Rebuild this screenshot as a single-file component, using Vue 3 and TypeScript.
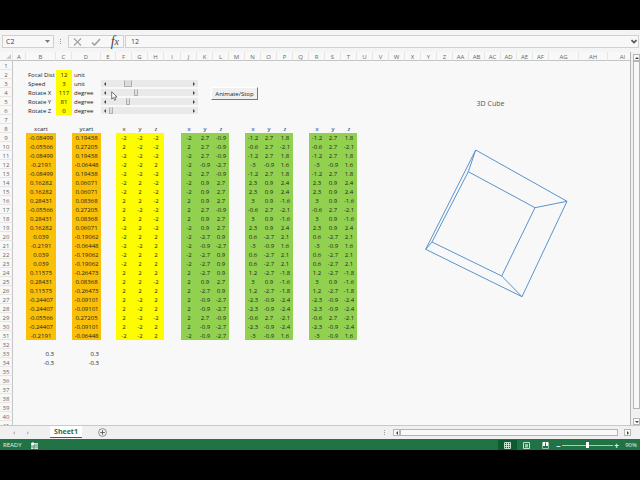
<script setup lang="ts">
import { computed, reactive, ref } from 'vue'

type Triple = [number, number, number]

interface Vertex {
  cart: [number, number]
  base: Triple
  rotX: Triple
  rotY: Triple
}

interface Cell {
  text: string | number
  kind: string
}

interface Setting {
  label: string
  unit: string
  value: number
  max: number
  wide: boolean
}

const vertices: Record<string, Vertex> = {
  A: { cart: [-0.08499, 0.19438], base: [-2, -2, -2], rotX: [-2, 2.7, -0.9], rotY: [-1.2, 2.7, 1.8] },
  B: { cart: [-0.05566, 0.27205], base: [2, -2, -2], rotX: [2, 2.7, -0.9], rotY: [-0.6, 2.7, -2.1] },
  C: { cart: [-0.2191, -0.06448], base: [-2, -2, 2], rotX: [-2, -0.9, -2.7], rotY: [-3, -0.9, 1.6] },
  D: { cart: [0.16282, 0.06071], base: [-2, 2, -2], rotX: [-2, 0.9, 2.7], rotY: [2.3, 0.9, 2.4] },
  E: { cart: [0.28431, 0.08368], base: [2, 2, -2], rotX: [2, 0.9, 2.7], rotY: [3, 0.9, -1.6] },
  F: { cart: [0.039, -0.19062], base: [-2, 2, 2], rotX: [-2, -2.7, 0.9], rotY: [0.6, -2.7, 2.1] },
  G: { cart: [0.11575, -0.26473], base: [2, 2, 2], rotX: [2, -2.7, 0.9], rotY: [1.2, -2.7, -1.8] },
  H: { cart: [-0.24407, -0.09101], base: [2, -2, 2], rotX: [2, -0.9, -2.7], rotY: [-2.3, -0.9, -2.4] },
}
const path = 'ABACADDEBEDFCFFGEGHHBHC'

const columns: string[] = [
  ...'ABCDEFGHIJKLMNOPQRSTUVWXYZ'.split(''),
  'AA', 'AB', 'AC', 'AD', 'AE', 'AF', 'AG', 'AH', 'AI',
]
const sizes: Record<string, string> = {
  A: 'c-a', B: 'c-b', C: 'c-c', D: 'c-d', E: 'c-e', I: 'c-i', AG: 'c-ag', AH: 'c-ah', AI: 'c-ai',
}

const settings = reactive<Setting[]>([
  { label: 'Focal Dist', unit: 'unit', value: 12, max: 100, wide: false },
  { label: 'Speed', unit: 'unit', value: 3, max: 14, wide: true },
  { label: 'Rotate X', unit: 'degree', value: 117, max: 360, wide: false },
  { label: 'Rotate Y', unit: 'degree', value: 81, max: 360, wide: false },
  { label: 'Rotate Z', unit: 'degree', value: 0, max: 360, wide: false },
])
const sliders = computed(() => settings.slice(1))
const zoomLevel = ref(90)

const blocks = [
  { start: 5, kind: 'yellow', key: 'base' as const },
  { start: 9, kind: 'green', key: 'rotX' as const },
  { start: 13, kind: 'green', key: 'rotY' as const },
  { start: 17, kind: 'green', key: 'rotY' as const },
]

const rows = computed<Cell[][]>(() =>
  Array.from({ length: 41 }, (_, i) => {
    const n = i + 1
    const cells: Cell[] = columns.map(() => ({ text: '', kind: '' }))
    if (n >= 2 && n <= 6) {
      const s = settings[n - 2]
      cells[1] = { text: s.label, kind: 'left' }
      cells[2] = { text: s.value, kind: 'yellow' }
      cells[3] = { text: s.unit, kind: 'left' }
    }
    if (n === 8) {
      cells[1].text = 'xcart'
      cells[3].text = 'ycart'
      blocks.forEach((b) => 'xyz'.split('').forEach((t, k) => { cells[b.start + k].text = t }))
    }
    if (n >= 9 && n <= 31) {
      const v = vertices[path[n - 9]]
      cells[1] = { text: v.cart[0], kind: 'orange' }
      cells[3] = { text: v.cart[1], kind: 'orange' }
      blocks.forEach((b) => v[b.key].forEach((t, k) => { cells[b.start + k] = { text: t, kind: b.kind } }))
    }
    if (n === 33 || n === 34) {
      const t = n === 33 ? 0.3 : -0.3
      cells[1] = { text: t, kind: 'right' }
      cells[3] = { text: t, kind: 'right' }
    }
    return cells
  }),
)
</script>

<template>
  <div class="screen">
    <header class="formula-bar">
      <div class="name-box">
        <input class="name" aria-label="Name box" value="C2" />
        <button class="plain" aria-label="Cell list">
          <svg width="5" height="3" viewBox="0 0 5 3"><path d="M0 0h5L2.500 3z" fill="#777" /></svg>
        </button>
      </div>
      <span class="dots"></span>
      <div class="tools">
        <button class="plain" aria-label="Cancel">
          <svg width="9" height="8" viewBox="0 0 9 8"><path d="M1 .5 8 7.500M8 .5 1 7.500" stroke="#a3a3a3" stroke-width="1.200" /></svg>
        </button>
        <button class="plain" aria-label="Enter">
          <svg width="10" height="8" viewBox="0 0 10 8"><path d="M1 4.500 3.500 7 9 1" fill="none" stroke="#a3a3a3" stroke-width="1.700" /></svg>
        </button>
        <button class="plain fx" aria-label="Insert function">f<span class="fx-x">x</span></button>
      </div>
      <div class="formula">
        <input aria-label="Formula" value="12" />
        <button class="plain" aria-label="Expand formula bar">
          <svg width="6" height="5" viewBox="0 0 6 5"><path d="M.5 1 3 3.500 5.500 1" fill="none" stroke="#555" stroke-width="1.600" /></svg>
        </button>
      </div>
    </header>

    <main class="workspace">
      <div class="sheet">
        <table>
          <colgroup>
            <col class="c-head" />
            <col v-for="c in columns" :key="c" :class="sizes[c] || 'c-std'" />
          </colgroup>
          <thead>
            <tr>
              <th class="corner"><svg width="5" height="5" viewBox="0 0 5 5"><path d="M5 0v5H0z" fill="#ccc" /></svg></th>
              <th v-for="c in columns" :key="c" scope="col">{{ c }}</th>
            </tr>
          </thead>
          <tbody>
            <tr v-for="(row, i) in rows" :key="i">
              <th scope="row">{{ i + 1 }}</th>
              <td v-for="(cell, k) in row" :key="k" :class="cell.kind">{{ cell.text }}</td>
            </tr>
          </tbody>
        </table>

        <div class="sliders">
          <div v-for="s in sliders" :key="s.label" class="slider">
            <span class="tri prev"></span>
            <input v-model.number="s.value" type="range" min="0" :max="s.max" :class="{ wide: s.wide }" :aria-label="s.label" />
            <span class="tri next"></span>
          </div>
        </div>
        <button class="animate">Animate/Stop</button>

        <figure class="chart">
          <figcaption>3D Cube</figcaption>
          <svg viewBox="0 0 150 158" width="150" height="158" role="img" aria-label="3D Cube wireframe">
            <g fill="none" stroke="#5b93cc" stroke-width="1" stroke-linejoin="round">
              <path d="M55.700 10 147 61.300 102 156.700 5.700 109.300Z" />
              <path d="M48.300 31.700 115 67.700 81.700 136 12 102Z" />
              <path d="M55.700 10 48.300 31.700M147 61.300 115 67.700M102 156.700 81.700 136M5.700 109.300 12 102" />
            </g>
          </svg>
        </figure>

        <svg class="pointer" width="7" height="10" viewBox="0 0 7 10"><path d="M.7.700v7.300l1.700-1.500 1.200 2.800 1.300-.6-1.200-2.700h2.400z" fill="#fff" stroke="#555" stroke-width=".8" /></svg>
      </div>
      <div class="vbar">
        <button class="scroll-btn" aria-label="Scroll up"><span class="tri up"></span></button>
        <div class="v-thumb"></div>
        <button class="scroll-btn" aria-label="Scroll down"><span class="tri down"></span></button>
      </div>
    </main>

    <nav class="tabs">
      <div class="tab-side">
        <button class="plain" aria-label="Previous sheet"><span class="tri prev pale"></span></button>
        <button class="plain" aria-label="Next sheet"><span class="tri next pale"></span></button>
      </div>
      <a class="tab" href="#sheet1">Sheet1</a>
      <button class="plain add" aria-label="New sheet">
        <svg width="9" height="9" viewBox="0 0 9 9"><circle cx="4.500" cy="4.500" r="3.900" fill="none" stroke="#777" stroke-width=".8" /><path d="M4.500 2.200v4.600M2.200 4.500h4.600" stroke="#666" /></svg>
      </button>
      <div class="hbar">
        <span class="dots"></span>
        <button class="scroll-btn" aria-label="Scroll left"><span class="tri prev"></span></button>
        <div class="h-thumb"></div>
        <button class="scroll-btn h-next" aria-label="Scroll right"><span class="tri next"></span></button>
      </div>
    </nav>

    <footer class="status">
      <span>READY</span>
      <svg class="macro" width="7" height="7" viewBox="0 0 7 7"><path d="M0 1h7v6H0z" fill="#cfe3d7" /><path d="M0 3h7M0 5h7M3 2v5" stroke="#217346" stroke-width=".6" /><circle cx="1.800" cy="1.800" r="1.500" fill="#fff" /></svg>
      <div class="views">
        <button class="plain view on" aria-label="Normal view">
          <svg width="7" height="7" viewBox="0 0 7 7"><path d="M.5.5h6v6h-6zM2.500.5v6M4.500.5v6M.5 2.500h6M.5 4.500h6" fill="none" stroke="#d5ead9" stroke-width=".9" /></svg>
        </button>
        <button class="plain view" aria-label="Page layout">
          <svg width="7" height="7" viewBox="0 0 7 7"><path d="M.5.5h6v6h-6z" fill="none" stroke="#c3dccb" /><path d="M2 2h3v3.500H2z" fill="#9cc4aa" /></svg>
        </button>
        <button class="plain view" aria-label="Page break preview">
          <svg width="7" height="7" viewBox="0 0 7 7"><path d="M.5.5h6v6h-6z" fill="none" stroke="#b9d6c3" stroke-width=".8" /><path d="M1 0h2v4H1zM4 0h2v4H4z" fill="#fff" /></svg>
        </button>
      </div>
      <span class="sign">−</span>
      <input v-model.number="zoomLevel" class="zoom" type="range" min="0" max="180" aria-label="Zoom" />
      <span class="sign">+</span>
      <span class="percent">{{ zoomLevel }}%</span>
    </footer>
  </div>
</template>

<style>
body {
  background: #000;
}
</style>

<style scoped>
* {
  box-sizing: border-box;
}
.screen {
  display: flex;
  flex-direction: column;
  height: 100vh;
  padding: 30px 0;
  background: #000;
  color: #222;
  font: 6px/9px "Open Sans", "Noto Sans", sans-serif;
}
button,
input {
  margin: 0;
  padding: 0;
  border: 0;
  background: none;
  color: inherit;
  font: inherit;
}
.plain {
  display: flex;
  align-items: center;
  justify-content: center;
}
.plain svg,
th svg,
figure svg {
  display: block;
}
.formula-bar {
  display: flex;
  flex: none;
  align-items: center;
  height: 22px;
  padding: 1px 1px 0 2px;
  background: #f4f4f4;
}
.name-box,
.tools,
.formula {
  display: flex;
  align-items: center;
  height: 13px;
  border: 1px solid #d0d0d0;
  background: #f8f8f8;
}
.name-box {
  width: 52px;
  padding: 0 3px;
}
.name-box input,
.formula input {
  flex: 1;
  min-width: 0;
  color: #444;
  font-size: 7px;
}
.dots {
  width: 1px;
  height: 5px;
  background: repeating-linear-gradient(#999 0 1px, transparent 1px 2px);
}
.formula-bar .dots {
  margin: 0 7px 0 6px;
}
.tools {
  justify-content: space-between;
  width: 56px;
  padding: 0 4px;
}
.fx {
  color: #444;
  font: italic 14px/11px "Liberation Serif", serif;
}
.fx-x {
  font-size: 10px;
}
.formula {
  flex: 1;
  margin-left: 1px;
  padding: 0 1px 0 5px;
}
.workspace {
  display: flex;
  flex: 1;
  min-height: 0;
  background: #f8f8f8;
}
.sheet {
  position: relative;
  flex: 1;
  overflow: hidden;
  border-right: 1px solid #b5b5b5;
}
table {
  width: calc(100% + 8px);
  table-layout: fixed;
  border-collapse: separate;
  border-spacing: 0;
}
th,
td {
  height: 9px;
  padding: 2px 0 0;
  overflow: hidden;
  font-weight: normal;
  line-height: 7px;
  text-align: center;
  vertical-align: top;
  white-space: nowrap;
}
th {
  color: #666;
  line-height: 6px;
}
thead th {
  border-bottom: 1px solid #c4c4c4;
  border-right: 1px solid #e6e6e6;
}
tbody th {
  border-right: 1px solid #c4c4c4;
  border-bottom: 1px solid #e6e6e6;
}
.corner svg {
  margin-left: 6px;
}
.c-head { width: 13px; }
.c-a { width: 13px; }
.c-b { width: 30px; }
.c-c { width: 16px; }
.c-d { width: 29px; }
.c-e { width: 15px; }
.c-std { width: 16px; }
.c-i { width: 17px; }
.c-ag { width: 30px; }
.c-ah { width: 29px; }
td.left {
  padding-left: 2px;
  text-align: left;
}
td.right {
  padding-right: 2px;
  text-align: right;
}
.yellow { background: #fdfd00; }
.orange { background: #fabf07; }
.green { background: #92d050; }
.sliders {
  position: absolute;
  top: 27px;
  left: 101px;
  width: 97px;
}
.slider {
  display: flex;
  align-items: center;
  justify-content: space-between;
  height: 9px;
  padding: 0 3px;
  background: linear-gradient(#f8f8f8 1px, #e9e9e9 1px 8px, #f8f8f8 8px);
}
.slider input {
  width: 82px;
  height: 7px;
  appearance: none;
}
.slider input::-webkit-slider-thumb {
  width: 4px;
  height: 7px;
  appearance: none;
  border: 1px solid #b0b0b0;
  border-top-color: #e0e0e0;
  border-radius: 0;
  background: #dcdcdc;
}
.slider .wide::-webkit-slider-thumb {
  width: 8px;
}
.tri {
  width: 0;
  height: 0;
  border: 2px solid transparent;
}
.prev {
  border-left-width: 0;
  border-right-color: #444;
}
.next {
  border-right-width: 0;
  border-left-color: #444;
}
.up {
  border-top-width: 0;
  border-bottom-color: #444;
}
.down {
  border-bottom-width: 0;
  border-top-color: #444;
}
.prev.pale { border-right-color: #bbb; }
.next.pale { border-left-color: #bbb; }
.animate {
  position: absolute;
  top: 35px;
  left: 211px;
  width: 47px;
  height: 13px;
  padding-top: 1px;
  border: 1px solid #fff;
  border-right-color: #777;
  border-bottom-color: #777;
  background: #f0f0f0;
}
.chart {
  position: absolute;
  top: 46px;
  left: 420px;
  width: 150px;
  margin: 0;
}
figcaption {
  height: 42px;
  padding-right: 9px;
  color: #555;
  font-size: 7px;
  line-height: 12px;
  text-align: center;
}
.pointer {
  position: absolute;
  top: 39px;
  left: 111px;
}
.vbar {
  display: flex;
  flex-direction: column;
  width: 9px;
  padding: 2px 0 0 2px;
  background: #f1f1f1;
}
.scroll-btn {
  display: flex;
  align-items: center;
  justify-content: center;
  flex: none;
  width: 7px;
  height: 7px;
  border: 1px solid #b5b5b5;
  background: #fbfbfb;
}
.v-thumb {
  flex: 1;
  margin-bottom: 9px;
  border: 1px solid #b5b5b5;
  background: #f8f8f8;
}
.tabs {
  display: flex;
  flex: none;
  height: 14px;
  border-top: 1px solid #c8c8c8;
  background: #f0f0f0;
}
.tab-side {
  display: flex;
  align-items: center;
  gap: 12px;
  width: 50px;
  padding-left: 13px;
}
.tab {
  width: 32px;
  height: 12px;
  border-bottom: 1px solid #217346;
  background: #fff;
  color: #217346;
  font-size: 7px;
  font-weight: bold;
  line-height: 12px;
  text-align: center;
  text-decoration: none;
}
.add {
  width: 41px;
}
.hbar {
  display: flex;
  align-items: center;
  width: 40%;
  margin-left: auto;
  padding-right: 9px;
}
.hbar .dots {
  margin-right: 8px;
}
.h-thumb {
  flex: 1;
  height: 7px;
  border: 1px solid #b5b5b5;
  background: #f8f8f8;
}
.h-next {
  margin-left: 6px;
}
.status {
  display: flex;
  flex: none;
  align-items: center;
  height: 11px;
  padding: 1px 3px 0;
  background: #217346;
  color: #e8f3ec;
}
.macro {
  margin-left: 9px;
}
.views {
  display: flex;
  align-self: stretch;
  margin-left: auto;
}
.view {
  width: 19px;
}
.view.on {
  background: #0c5c30;
}
.sign {
  width: 7px;
  font-size: 8px;
  font-weight: bold;
  text-align: center;
}
.zoom {
  width: 51px;
  height: 7px;
  appearance: none;
  background: linear-gradient(transparent 3px, #a9cdb6 3px 4px, transparent 4px);
}
.zoom::-webkit-slider-thumb {
  width: 3px;
  height: 6px;
  appearance: none;
  border-radius: 0;
  background: #fff;
}
.percent {
  width: 17px;
  text-align: right;
}
</style>
